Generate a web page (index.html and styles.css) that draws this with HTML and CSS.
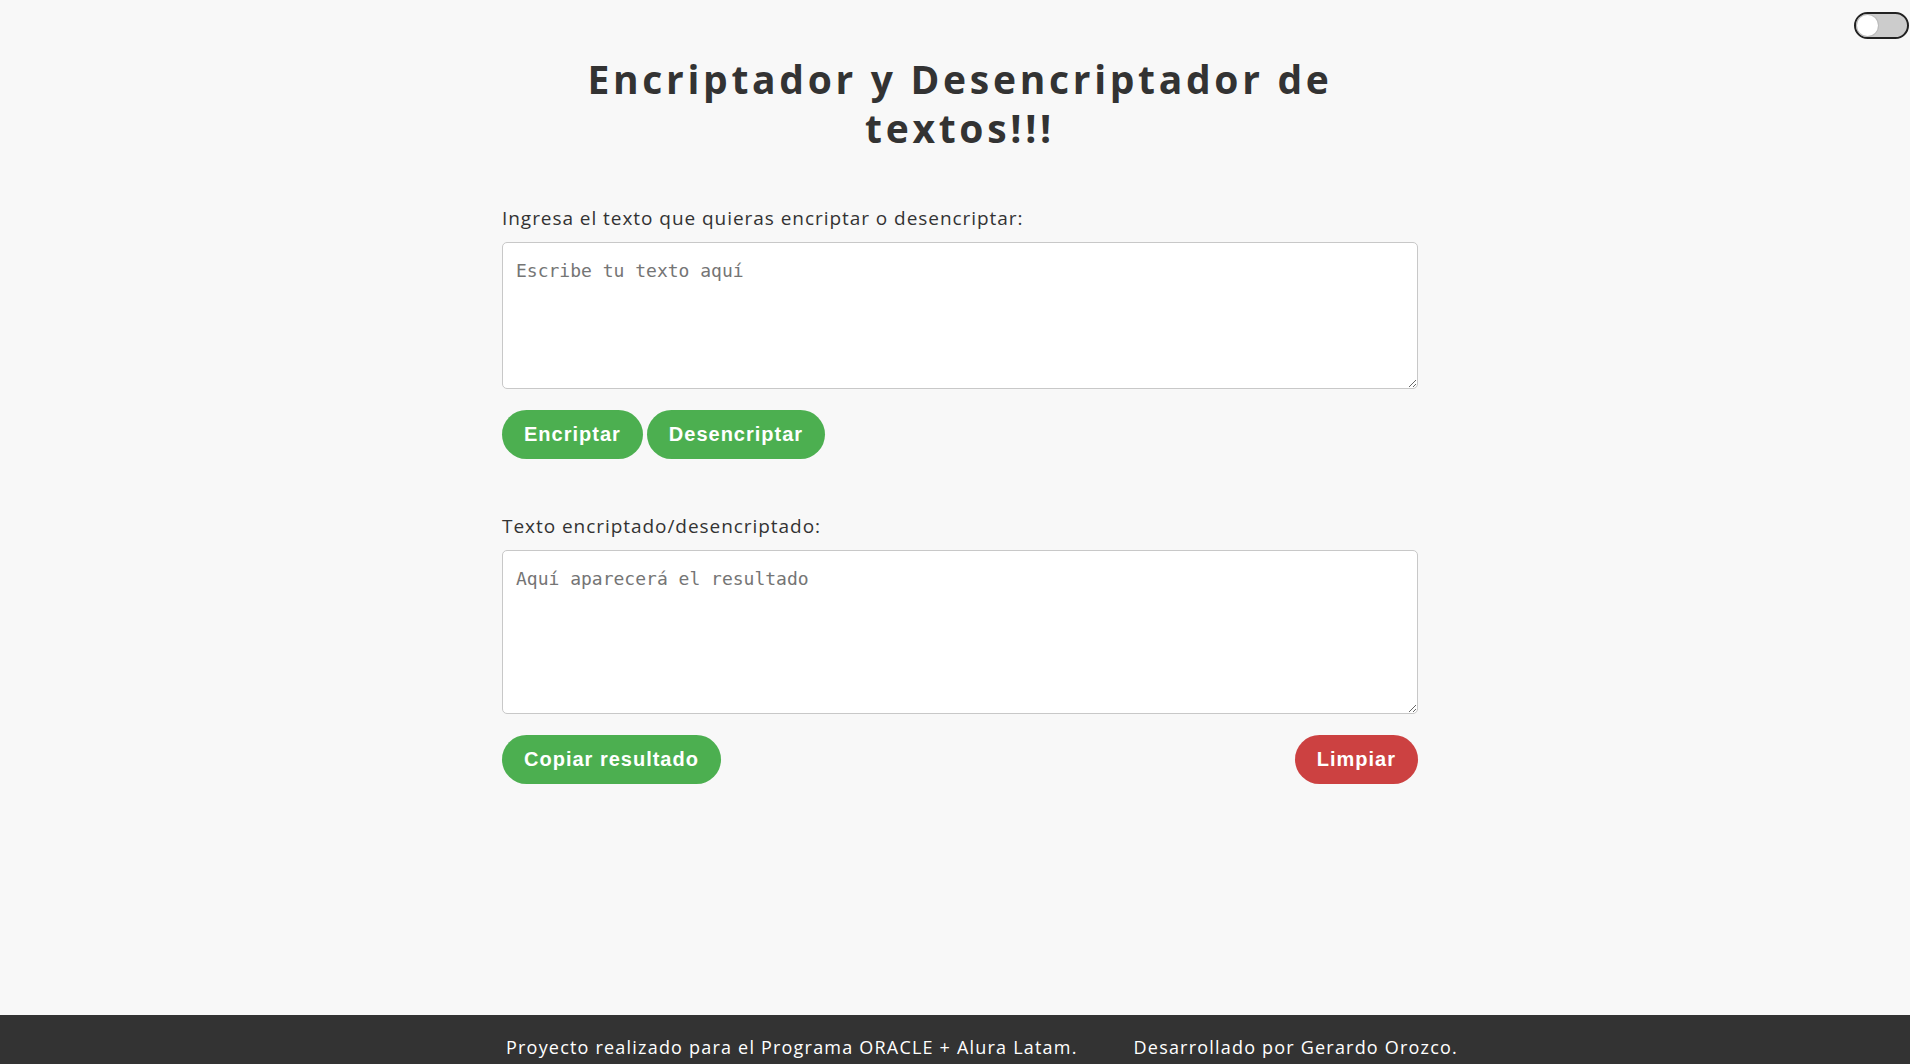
FILE: index.html
```html
<!DOCTYPE html>
<html lang="es">
<head>
<meta charset="UTF-8">
<title>Encriptador y Desencriptador</title>
<link rel="stylesheet" href="styles.css">
</head>
<body>
<label class="switch"><input type="checkbox"><span class="slider"></span></label>
<main class="main">
  <h1 class="title">Encriptador y Desencriptador de textos!!!</h1>
  <section class="block">
    <label class="label" for="entrada">Ingresa el texto que quieras encriptar o desencriptar:</label>
    <textarea id="entrada" class="area area-in" placeholder="Escribe tu texto aquí"></textarea>
    <div class="row">
      <button class="btn btn-green">Encriptar</button>
      <button class="btn btn-green">Desencriptar</button>
    </div>
  </section>
  <section class="block block-out">
    <label class="label" for="salida">Texto encriptado/desencriptado:</label>
    <textarea id="salida" class="area area-out" placeholder="Aquí aparecerá el resultado"></textarea>
    <div class="row row-split">
      <button class="btn btn-green">Copiar resultado</button>
      <button class="btn btn-red">Limpiar</button>
    </div>
  </section>
</main>
<footer class="footer">
  <p class="foot-text">Proyecto realizado para el Programa ORACLE + Alura Latam.</p>
  <p class="foot-text">Desarrollado por Gerardo Orozco.</p>
</footer>
</body>
</html>
```
FILE: styles.css
```css
* { box-sizing: border-box; }
html, body { margin: 0; padding: 0; }
body {
  background: #f8f8f8;
  color: #333;
  font-family: "Open Sans", "Noto Sans", sans-serif;
  position: relative;
}
.switch {
  position: absolute;
  top: 12px;
  right: 1px;
  width: 55px;
  height: 27px;
  display: block;
}
.switch input { display: none; }
.slider {
  display: block;
  width: 100%;
  height: 100%;
  background: #cccccc;
  border: 2px solid #222;
  border-radius: 14px;
  position: relative;
}
.slider::before {
  content: "";
  position: absolute;
  left: 1px;
  top: 1px;
  width: 21px;
  height: 21px;
  border-radius: 50%;
  background: #fff;
  box-shadow: 0 0 0 1px #bbb;
}
.main {
  width: 916px;
  margin: 0 auto;
  padding: 54px 0 231px 10px;
  box-sizing: content-box;
}
.title {
  margin: 0 auto;
  width: 900px;
  text-align: center;
  font-size: 39px;
  line-height: 49px;
  font-weight: 700;
  letter-spacing: 3.7px;
  color: #333;
}
.block {
  margin-top: 55px;
  display: flex;
  flex-direction: column;
}
.block-out { margin-top: 56px; }
.label {
  font-size: 19px;
  line-height: 22px;
  letter-spacing: 0.95px;
  color: #333;
  margin-bottom: 13px;
}
.area {
  width: 916px;
  border: 1px solid #c8c8c8;
  border-radius: 5px;
  background: #fff;
  padding: 17px 13px 13px;
  font-family: "DejaVu Sans Mono", monospace;
  font-size: 18px;
  line-height: 22px;
  color: #333;
  resize: vertical;
  display: block;
}
.area::placeholder { color: #757575; }
.area-in { height: 147px; }
.area-out { height: 164px; }
.row {
  margin-top: 21px;
  display: flex;
  gap: 4px;
}
.row-split { justify-content: space-between; }
.btn {
  height: 49px;
  padding: 0 22px;
  border: none;
  border-radius: 25px;
  color: #fff;
  font-family: "Liberation Sans", Arial, sans-serif;
  font-weight: 700;
  font-size: 20px;
  letter-spacing: 1px;
  cursor: pointer;
}
.btn-green { background: #4caf50; }
.btn-red { background: #cc4141; }
.footer {
  background: #333;
  color: #fff;
  display: flex;
  justify-content: center;
  gap: 56px;
  padding: 21px 0 24px 54px;
}
.foot-text {
  margin: 0;
  font-size: 18px;
  line-height: 22px;
  letter-spacing: 1.2px;
}
```
